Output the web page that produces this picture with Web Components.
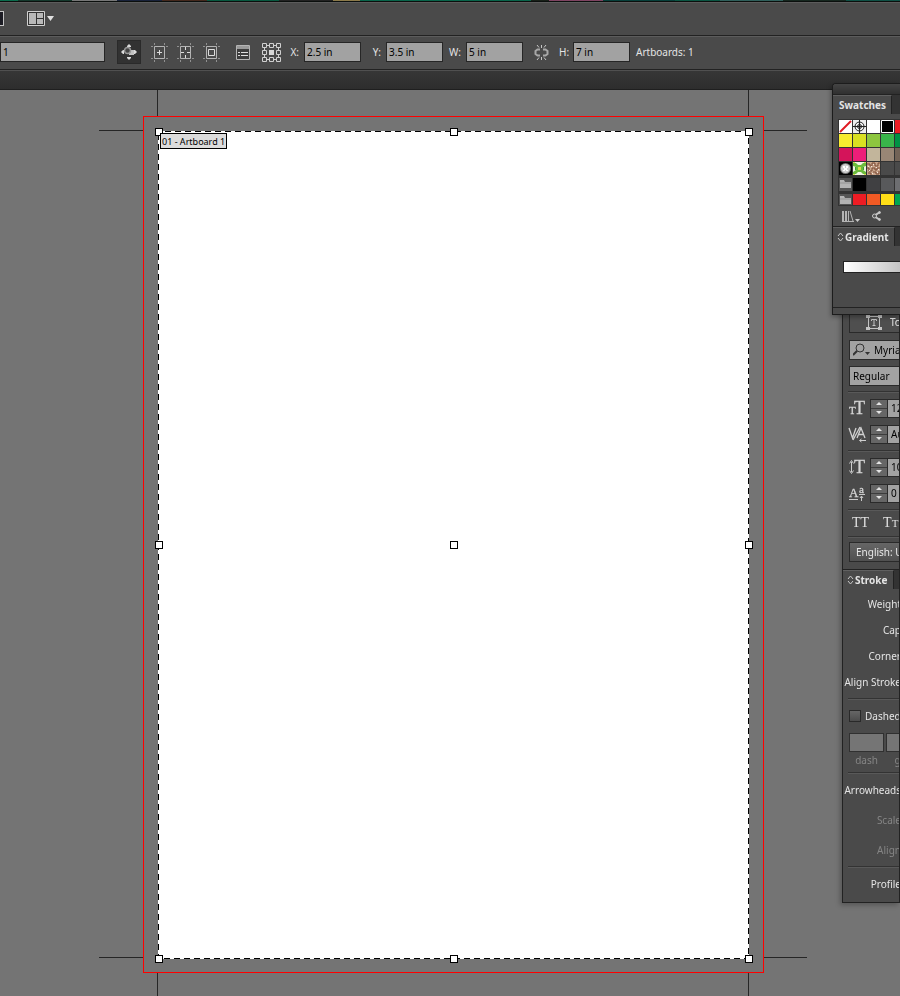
<!DOCTYPE html>
<html lang="en">
<head>
<meta charset="utf-8">
<title>Artboard editor</title>
<style>
html,body{margin:0;height:100%}
body{font:10px/14px "Noto Sans","DejaVu Sans",sans-serif;color:#e4e4e4;background:#747474;--edge:#262626;--face:#4a4a4a;--field:#a2a2a2}
</style>
</head>
<body>
<editor-app></editor-app>
<script>
const make=(name,html,init)=>{
  const t=document.createElement('template');t.innerHTML=html;
  customElements.define(name,class extends HTMLElement{
    connectedCallback(){
      if(this.shadowRoot)return;
      const root=this.attachShadow({mode:'open'});
      root.append(t.content.cloneNode(true));
      if(init)init(this,root);
    }
  });
};

/* labelled text box: label, value, label-width, box-width */
make('tool-field',`<style>
:host{display:flex;align-items:center;flex:none}
label{box-sizing:border-box;padding-right:5px;text-align:right;white-space:nowrap}
input{box-sizing:border-box;height:20px;border:1px solid var(--edge);background:var(--field);color:#000;font:inherit;padding:0 2px;margin:0;border-radius:0;outline:none}
</style><label for="i"></label><input id="i" type="text">`,(h,r)=>{
  const l=r.querySelector('label'),i=r.querySelector('input');
  if(h.hasAttribute('label')){l.textContent=h.getAttribute('label');l.style.width=h.getAttribute('label-width')+'px'}
  else{l.remove();i.setAttribute('aria-label','Name')}
  i.value=h.getAttribute('value');i.style.width=h.getAttribute('box-width')+'px';
});

make('icon-button',`<style>
:host{display:flex;flex:none;justify-content:center;align-items:center;width:26px}
:host([wide]){width:36px}
:host([roomy]){width:28px}
button{all:unset;display:grid;place-items:center;width:24px;height:24px;box-sizing:border-box}
:host([on]) button{background:#323232;border:1px solid #2a2a2a}
</style><button type="button"><slot></slot></button>`,(h,r)=>{r.querySelector('button').setAttribute('aria-label',h.getAttribute('name'))});

make('app-bar',`<style>
:host{display:block}
.strip{height:2px;border-bottom:1px solid #0b0f0d;box-sizing:border-box;background:linear-gradient(90deg,#0a6b4c 0 2%,#14382c 2% 8%,#777 8% 13%,#18223a 13% 18%,#44281c 18% 23%,#07583f 23% 31%,#222 31% 37%,#8c7a4a 37% 40%,#08644a 40% 59%,#182018 59% 61%,#7f4462 61% 67%,#063f3a 67% 75%,#0a5542 75% 80%,#2f5f5b 80% 87%,#16271f 87% 94%,#0e5045 94%)}
.bar{display:flex;align-items:center;height:34px;padding-bottom:2px;background:var(--face);border-top:1px solid #5c5c5c;border-bottom:1px solid #222;box-sizing:border-box}
.cut{width:4px;height:15px;box-sizing:border-box;border:1px solid #c4c4c4;border-left:0;background:#1c1c24;margin-right:23px}
button{all:unset;display:flex;align-items:center;gap:2px}
</style><div class="strip"></div><div class="bar"><div class="cut"></div>
<button type="button" aria-label="Arrange documents"><svg width="18" height="15"><path d="M.5.5h17v14H.5z" fill="#333" stroke="#d0d0d0"/><path d="M2 2h7v11H2zM10 2h6v5h-6zM10 8h6v5h-6z" fill="#b8b8b8"/></svg>
<svg width="7" height="5"><path d="M0 0h7L3.500 5z" fill="#e0e0e0"/></svg></button></div>`);

const cropMarks=inner=>`<svg width="17" height="19" fill="none" stroke="#b4b4b4"><path d="M3.500 3.500h10v12h-10z"/><path d="M0 3.500h2M15 3.500h2M0 15.500h2M15 15.500h2M3.500 0v2M13.500 0v2M3.500 17v2M13.500 17v2" stroke="#909090"/>${inner}</svg>`;

make('control-bar',`<style>
:host{display:flex;align-items:center;height:34px;padding-bottom:2px;box-sizing:border-box;background:var(--face);border-top:1px solid #5c5c5c;border-bottom:1px solid #222}
.group{display:flex;align-items:center;padding:0 5px 0 12px}
.group icon-button:first-child{width:29px;justify-content:flex-start}
.count{padding-left:6px;white-space:nowrap}
</style>
<tool-field value="1" box-width="105"></tool-field>
<div class="group">
<icon-button on name="Move artwork with artboard"><svg width="16" height="16"><path d="M8 0l2 2v1H6V2zM8 16l2-2v-1H6v1zM0 8l2-2h1v4H2zM16 8l-2-2h-1v4h1z" fill="#dcdcdc"/><path d="M8 6h5v5H8z" fill="#c2c2c2"/><circle cx="6.500" cy="6.500" r="3" fill="#444" stroke="#989898" stroke-width="1.500"/></svg></icon-button>
<icon-button name="New artboard">${cropMarks('<path d="M6 9.500h5M8.500 7v5" stroke="#ddd"/>')}</icon-button>
<icon-button name="Show center mark">${cropMarks('<path d="M8.500 4v3M8.500 12v3M4 9.500h3M10 9.500h3" stroke="#ddd"/>')}</icon-button>
<icon-button name="Show safe areas">${cropMarks('<path d="M5.500 6.500h6v6h-6z" stroke="#ddd"/>')}</icon-button>
</div>
<icon-button roomy name="Artboard options"><svg width="14" height="15"><path d="M.5.5h13v14H.5z" fill="#3c3c3c" stroke="#b4b4b4"/><path d="M1 1h12v3H1z" fill="#999"/><path d="M2 7.500h2M5 7.500h7M2 10.500h2M5 10.500h7" stroke="#ddd"/></svg></icon-button>
<icon-button roomy name="Reference point"><svg width="19" height="19"><g fill="none" stroke="#d0d0d0"><path d="M5 2.500h2M12 2.500h2M5 16.500h2M12 16.500h2M2.500 5v2M2.500 12v2M16.500 5v2M16.500 12v2"/><path d="M.5.5h4v4h-4zM7.500.5h4v4h-4zM14.500.5h4v4h-4zM.5 7.500h4v4h-4zM14.500 7.500h4v4h-4zM.5 14.500h4v4h-4zM7.500 14.500h4v4h-4zM14.500 14.500h4v4h-4z"/></g><path d="M7 7h5v5H7z" fill="#d8d8d8"/></svg></icon-button>
<tool-field label="X:" label-width="19" box-width="57" value="2.5 in"></tool-field>
<tool-field label="Y:" label-width="25" box-width="57" value="3.5 in"></tool-field>
<tool-field label="W:" label-width="23" box-width="57" value="5 in"></tool-field>
<icon-button wide name="Constrain proportions"><svg width="15" height="15" fill="none" stroke="#c6c6c6"><path d="M6 4.500H3.500L1.500 6v3l2 1.500H6M9 4.500h2.500l2 1.500v3l-2 1.500H9" stroke="#a8a8a8" stroke-width="2"/><path d="M3 0l2 2.500M7.500 0v3M12 0l-2 2.500M3 15l2-2.500M7.500 12v3M12 15l-2-2.500"/></svg></icon-button>
<tool-field label="H:" label-width="14" box-width="57" value="7 in"></tool-field>
<span class="count">Artboards: 1</span>`);

make('artboard-canvas',`<style>
:host{display:block;position:relative;flex:1;min-height:0;overflow:hidden;background:#747474}
svg{display:block;position:absolute;left:0;top:0;width:100%;height:100%}
.tag{position:absolute;left:160px;top:43px;color:#000;background:#dcdcdc;border:1px solid #000;padding:1px 1px 0;font-size:9px;line-height:13px;white-space:nowrap}
</style>
<svg shape-rendering="crispEdges"><path d="M157.500 0v26M748.500 0v26M157.500 883v200M748.500 883v200M99 40.500h44M764 40.500h43M99 867.500h44M764 867.500h43" stroke="#262626"/>
<path d="M143.500 26.500h620v856h-620z" fill="none" stroke="#f00"/>
<path d="M158 41h591v828H158z" fill="#fff"/>
<path d="M158.500 41.500h590v827h-590z" fill="none" stroke="#000" stroke-dasharray="6 4" stroke-dashoffset="4"/>
<g id="handles" fill="#fff" stroke="#000"></g></svg>
<div class="tag">01 - Artboard 1</div>`,(h,r)=>{
  const g=r.getElementById('handles');
  for(const y of [38,451,865])for(const x of [155,450,745]){
    const q=document.createElementNS('http://www.w3.org/2000/svg','rect');
    for(const [k,v] of Object.entries({x:x+.5,y:y+.5,width:7,height:7}))q.setAttribute(k,v);
    g.append(q);
  }
});

make('panel-tab',`<style>
:host{display:flex;flex:none;height:19px;background:#333;line-height:17px;font-weight:700}
span{display:flex;align-items:center;gap:1px;background:var(--face);border-right:1px solid #222;padding:0 5px 0 6px;white-space:nowrap;border-top:1px solid #606060}
:host([arrows]) span{padding-left:4px}
svg{display:none}:host([arrows]) svg{display:block}
</style><span><svg width="7" height="10" fill="none" stroke="#c8c8c8"><path d="M1 4l2.500-3L6 4M1 6l2.500 3L6 6"/></svg><slot></slot></span>`);

make('swatch-grid',`<style>
:host{display:grid;grid-template-columns:repeat(5,13px);gap:1px;padding:1px;margin-left:5px;background:#333;width:69px}
i{height:13px;display:block}
i.low{height:11px}
i.folder{background:#555}
i.gap{margin-top:2px}
svg{display:block;max-height:100%}
</style>`,(h,r)=>{
  const none='<svg width="13" height="13"><path d="M0 0h13v13H0z" fill="#fff"/><path d="M1 12L12 1" stroke="#e01b22" stroke-width="2"/></svg>';
  const reg='<svg width="13" height="13" fill="none" stroke="#222"><path d="M0 0h13v13H0z" fill="#eee" stroke="none"/><circle cx="6.500" cy="6.500" r="4.500"/><circle cx="6.500" cy="6.500" r="2"/><path d="M6.500 0v13M0 6.500h13"/></svg>';
  const black='<svg width="13" height="13"><path d="M.5.5h12v12H.5z" stroke="#fff"/></svg>';
  const orb='<svg width="13" height="13"><path d="M0 0h13v13H0z"/><circle cx="6.500" cy="6.500" r="5.500" fill="#777"/><circle cx="6.500" cy="6.500" r="4.500" fill="#d0d0d0"/><path d="M4 4h2v2H4zM7 4h2v2H7zM5 6h3v2H5zM4 8h2v1H4zM7 8h2v1H7z" fill="#fff"/></svg>';
  const leaf='<svg width="13" height="13"><path d="M0 0h13v13H0z" fill="#f3f5e4"/><path d="M0 1h3l2 2h3l2-2h3v3l-3 1v3l3 2v2h-3l-2-2H5l-2 2H0v-2l3-2V5L0 4z" fill="#6cbb3c"/><path d="M5 5h3v3H5zM0 0h2v1H0zM11 0h2v1h-2zM0 12h2v1H0zM11 12h2v1h-2z" fill="#d4dc4c"/><path d="M2 5h1v3H2zM10 5h1v3h-1z" fill="#3b9a35"/></svg>';
  const rust='<svg width="13" height="13"><path d="M0 0h13v13H0z" fill="#c9a58c"/><path d="M0 2h3v2h2V1h3v3h3V1h2M0 6h2v3h3V6h3v2h2V6h3M1 11h3v2M6 10h3v2h3V9" fill="none" stroke="#7a4a34"/><path d="M4 4h1v1H4zM9 5h1v1H9zM2 8h1v1H2zM10 10h1v1h-1zM6 2h1v1H6zM1 4h1v1H1zM11 7h1v1h-1zM5 11h1v1H5z" fill="#f4e8de"/></svg>';
  const folder='<svg width="13" height="11"><path d="M1 2h4l1 2h6v6H1z" fill="#b4b4b4"/><path d="M1 5h11" stroke="#949494"/></svg>';
  const rows=[[none,reg,'#fff',black,'#ed1c24'],['#f7ec2f','#d9e021','#8dc63f','#39b54a','#009245'],['#d4145a','#ed1e79','#c2b59b','#998675','#736357'],[orb,leaf,rust,'#4a4a4a','#4a4a4a'],[folder,'#000','#404042','#58595b','#6d6e71'],[folder,'#ed1c24','#f15a24','#ffde17','#00a651']];
  rows.forEach((row,n)=>row.forEach(c=>{
    const e=document.createElement('i');
    if(c[0]==='#')e.style.background=c;else e.innerHTML=c;
    if(c===folder)e.className='folder';
    if(n>3)e.classList.add('gap');
    if(n===5)e.classList.add('low');
    r.append(e);
  }));
});

make('swatches-panel',`<style>
:host{display:flex;flex-direction:column;position:fixed;right:0;top:83px;width:68px;height:232px;box-sizing:border-box;overflow:hidden;background:var(--face);border:1px solid #1c1c1c;border-right:0;border-radius:4px 0 0 0;z-index:2;box-shadow:-1px 2px 5px #0005}
.grip{height:10px;flex:none;background:linear-gradient(#444,#303030);border-bottom:1px solid #222}
.tools{display:flex;flex:none;height:20px;align-items:center;gap:11px;padding-left:9px;border-bottom:1px solid #222}
.ramp{margin:15px 0 0 10px;height:10px;border:1px solid #222;border-right:0;background:linear-gradient(90deg,#fff,#c4c4c4)}
.body{flex:1}
.foot{height:6px;border-top:1px solid #222}
swatch-grid{margin-top:5px}
</style>
<div class="grip"></div><panel-tab>Swatches</panel-tab>
<swatch-grid></swatch-grid>
<div class="tools"><svg width="18" height="13" fill="none" stroke="#b4b4b4"><path d="M1 1v10M4 1v10" stroke-width="2"/><path d="M6.500 1v10M8 1l3 10M0 11.500h12"/><path d="M13 9h5l-2.500 3z" fill="#ccc" stroke="none"/></svg>
<svg width="11" height="12" fill="none" stroke="#c8c8c8"><path d="M9 2L3 6l6 4" stroke-width="2"/><circle cx="3.500" cy="6" r="2" fill="#555"/><circle cx="8.500" cy="2.500" r="1"/><circle cx="8.500" cy="9.500" r="1"/></svg></div>
<panel-tab arrows>Gradient</panel-tab>
<div class="body"><div class="ramp"></div></div><div class="foot"></div>`);

make('spin-field',`<style>
:host{display:flex;align-items:center;height:26px;padding-left:6px;white-space:nowrap}
.spin{display:flex;flex-direction:column;flex:none;width:18px;height:19px;box-sizing:border-box;border:1px solid #2a2a2a;background:#666}
button{all:unset;flex:1;display:grid;place-items:center}
button+button{border-top:1px solid #3c3c3c}
input{width:50px;height:19px;box-sizing:border-box;flex:none;font:inherit;color:#000;background:var(--field);border:1px solid #2a2a2a;border-left:0;padding:0 3px;margin:0}
</style><slot></slot><div class="spin"><button type="button" aria-label="Increase"><svg width="6" height="3"><path d="M0 3h6L3 0z" fill="#e4e4e4"/></svg></button><button type="button" aria-label="Decrease"><svg width="6" height="3"><path d="M0 0h6L3 3z" fill="#e4e4e4"/></svg></button></div><input type="text">`,(h,r)=>{
  const i=r.querySelector('input');i.value=h.getAttribute('value');i.setAttribute('aria-label',h.getAttribute('name'));
});

make('type-panel',`<style>
:host{display:block;position:fixed;right:0;top:308px;width:58px;box-sizing:border-box;overflow:hidden;background:var(--face);border:1px solid #222;border-top:0;z-index:1;box-shadow:-2px 2px 5px #0004;white-space:nowrap}
.row{display:flex;align-items:center;padding-left:6px;box-sizing:border-box}
.touch{height:28px}.font{height:27px}.style{height:25px}.caps{height:20px;gap:14px;padding-left:9px}.lang{height:24px}
.touch button{all:unset;box-sizing:border-box;display:flex;align-items:center;gap:8px;flex:none;width:150px;height:22px;padding-left:16px;border:1px solid #2a2a2a;background:#4f4f4f}
.box{display:flex;align-items:center;flex:none;width:150px;height:20px;box-sizing:border-box;border:1px solid #2a2a2a;background:var(--field);padding-left:3px;gap:4px}
.box input{all:unset;color:#000;width:100px}
select{appearance:none;flex:none;width:150px;height:20px;border:1px solid #2a2a2a;border-radius:0;background:var(--field);color:#000;font:inherit;padding:0 3px;margin:0}
.lang select{background:linear-gradient(#666,#505050);color:#e8e8e8;padding-left:6px}
hr{height:2px;border:0;margin:3px 0 2px 5px;background:linear-gradient(#333 50%,#595959 50%)}
spin-field svg{flex:none;margin-right:4px;overflow:visible}
svg text{font-family:"Liberation Serif",serif;fill:#d4d4d4;stroke:#d4d4d4;stroke-width:.3px}
.caps span{font:14px/18px "Liberation Serif",serif;color:#e0e0e0}
.caps small{font-size:11px}
.end{height:5px;border-bottom:1px solid #222}
.end.last{height:4px;border:0}
.right{display:flex;align-items:center;justify-content:flex-end;height:26px;margin-right:-2px}
.dim{color:#858585}
.arrow,.profile{height:28px}.scale{height:32px}.align{height:27px}
.dashed{height:27px;gap:4px}
.dashed input{appearance:none;flex:none;box-sizing:border-box;margin:0;width:12px;height:12px;border:1px solid #292929;background:linear-gradient(#666,#4c4c4c)}
.dashes{display:grid;grid-template-columns:35px 35px;column-gap:2px;padding-left:6px;height:40px;grid-template-rows:26px 14px;align-items:center;justify-items:center}
.dashes input{width:100%;height:19px;box-sizing:border-box;border:1px solid #303030;background:#757575;padding:0;margin:0}
.dashes label{grid-row:2;line-height:10px;align-self:start;width:33px;text-align:center}
panel-tab{margin-bottom:2px}
</style>
<div class="row touch"><button type="button"><svg width="16" height="15" fill="none" stroke="#c4c4c4"><path d="M2.500 2v11M13.500 2v11M3 1.500h10M3 13.500h10"/><path d="M0 0h4v3H0zM12 0h4v3h-4zM0 12h4v3H0zM12 12h4v3h-4z" fill="#c4c4c4" stroke="none"/><path d="M5.500 6V4.500h5V6M8 4.500v6M6.500 10.500h3"/></svg>Touch Type Tool</button></div>
<div class="row font"><div class="box"><svg width="17" height="14" fill="none" stroke="#333"><circle cx="7" cy="5" r="4"/><path d="M4 8L0 12" stroke-width="2"/><path d="M12 9h5l-2.500 3z" fill="#333" stroke="none"/></svg><input type="text" value="Myriad Pro" aria-label="Font family"></div></div>
<div class="row style"><select aria-label="Font style"><option>Regular</option></select></div>
<hr>
<spin-field name="Font size" value="12 pt"><svg width="17" height="17"><text x="0" y="14" font-size="11">T</text><text x="5" y="14" font-size="18">T</text></svg></spin-field>
<spin-field name="Kerning" value="Auto"><svg width="17" height="17" fill="none" stroke="#d0d0d0"><path d="M0 2l3.500 10L7 2M11 1L4 14M8 12l4-10 4 10M9.500 8.500h5" stroke-width="1.300"/><path d="M17 14.500h-6M12.500 13l-2 1.500 2 1.500"/></svg></spin-field>
<hr>
<spin-field name="Vertical scale" value="100%"><svg width="17" height="17"><path d="M2.500 3v10M.5 4.500l2-3 2 3M.5 11.500l2 3 2-3" fill="none" stroke="#ccc"/><text x="5" y="14" font-size="18">T</text></svg></spin-field>
<spin-field name="Baseline shift" value="0 pt"><svg width="17" height="17"><text x="0" y="12" font-size="13">A</text><text x="10" y="8" font-size="11">a</text><path d="M0 14.500h9M10 9.500h6M12.500 11v5M11 13l1.500-2 1.500 2" fill="none" stroke="#c8c8c8"/></svg></spin-field>
<hr>
<div class="row caps"><span>TT</span><span>T<small>T</small></span></div>
<hr>
<div class="row lang"><select aria-label="Language"><option>English: USA</option></select></div>
<div class="end"></div>
<panel-tab arrows>Stroke</panel-tab>
<div class="right">Weight</div><div class="right">Cap</div><div class="right">Corner</div><div class="right">Align Stroke</div>
<hr>
<div class="row dashed"><input type="checkbox" id="d"><label for="d">Dashed Line</label></div>
<div class="dashes dim"><input type="text" id="a"><input type="text" id="b"><label for="a">dash</label><label for="b">gap</label></div>
<hr>
<div class="right arrow">Arrowheads</div><div class="right scale dim">Scale</div><div class="right align dim">Align</div>
<hr>
<div class="right profile">Profile</div><div class="end last"></div>`);

make('editor-app',`<style>
:host{display:flex;flex-direction:column;height:100vh}
.tabs{height:20px;flex:none;box-sizing:border-box;background:linear-gradient(#363636,#2d2d2d);border-top:1px solid #505050;border-bottom:1px solid #1f1f1f}
app-bar,control-bar{flex:none}
</style><app-bar></app-bar><control-bar></control-bar><div class="tabs"></div>
<artboard-canvas></artboard-canvas><type-panel></type-panel><swatches-panel></swatches-panel>`);
</script>
</body>
</html>
